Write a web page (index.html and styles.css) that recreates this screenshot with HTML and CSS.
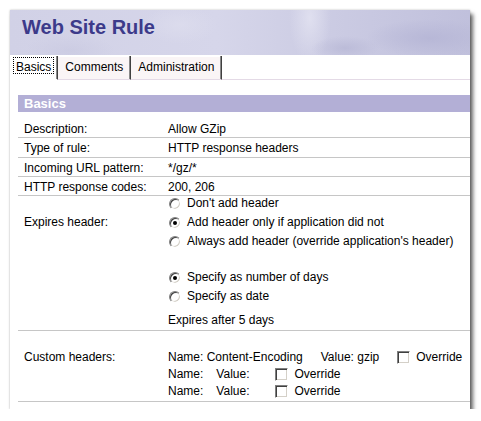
FILE: index.html
```html
<!DOCTYPE html>
<html>
<head>
<meta charset="utf-8">
<title>Web Site Rule</title>
<link rel="stylesheet" href="styles.css">
</head>
<body>
<div class="window">
  <div class="banner"><h1>Web Site Rule</h1></div>
  <div class="tabs">
    <div class="tab active"><span class="focus">Basics</span></div>
    <div class="tab">Comments</div>
    <div class="tab">Administration</div>
    <div class="tab-fill"></div>
  </div>
  <div class="content">
    <div class="section-title">Basics</div>
    <table class="props">
      <tr><td class="label">Description:</td><td class="value">Allow GZip</td></tr>
      <tr><td class="label">Type of rule:</td><td class="value">HTTP response headers</td></tr>
      <tr><td class="label">Incoming URL pattern:</td><td class="value">*/gz/*</td></tr>
      <tr><td class="label">HTTP response codes:</td><td class="value">200, 206</td></tr>
      <tr class="expires">
        <td class="label">Expires header:</td>
        <td class="value">
          <div class="opt-group first">
            <div class="opt"><span class="radio"></span>Don't add header</div>
            <div class="opt"><span class="radio checked"></span>Add header only if application did not</div>
            <div class="opt"><span class="radio"></span>Always add header (override application's header)</div>
          </div>
          <div class="opt-group second">
            <div class="opt"><span class="radio checked"></span>Specify as number of days</div>
            <div class="opt"><span class="radio"></span>Specify as date</div>
          </div>
          <div class="opt note">Expires after 5 days</div>
        </td>
      </tr>
      <tr class="custom">
        <td class="label">Custom headers:</td>
        <td class="value">
          <div class="hdr"><span>Name: Content-Encoding</span><span class="val-wide">Value: gzip</span><span class="check wide"></span>Override</div>
          <div class="hdr"><span>Name:</span><span class="val">Value:</span><span class="check"></span>Override</div>
          <div class="hdr"><span>Name:</span><span class="val">Value:</span><span class="check"></span>Override</div>
        </td>
      </tr>
    </table>
  </div>
</div>
</body>
</html>
```
FILE: styles.css
```css
* { box-sizing: border-box; }

body {
  margin: 0;
  background: #fff;
  font-family: "Liberation Sans", Arial, sans-serif;
  font-size: 12px;
  color: #000;
}

.window {
  margin: 10px 0 0 10px;
  width: 460px;
  height: 399px;
  background: #fff;
  overflow: hidden;
  box-shadow: 0 0 2px rgba(0,0,0,0.25), 3px 4px 4px rgba(0,0,0,0.6);
}

.banner {
  height: 45px;
  padding: 5px 0 0 12px;
  background:
    radial-gradient(ellipse 80px 24px at 420px 28px, rgba(182,182,214,0.9), rgba(182,182,214,0) 80%),
    radial-gradient(ellipse 45px 16px at 335px 38px, rgba(184,184,214,0.8), rgba(184,184,214,0) 75%),
    radial-gradient(ellipse 28px 60px at 300px 8px, rgba(228,228,242,0.8), rgba(228,228,242,0) 75%),
    radial-gradient(ellipse 45px 10px at 385px 52px, rgba(224,224,240,0.9), rgba(224,224,240,0) 75%),
    radial-gradient(ellipse 60px 20px at 60px 40px, rgba(200,200,224,0.6), rgba(200,200,224,0) 75%),
    radial-gradient(ellipse 50px 25px at 170px 15px, rgba(222,222,238,0.7), rgba(222,222,238,0) 75%),
    linear-gradient(90deg, #d1d1e6 0%, #d6d6ea 45%, #cdcde4 65%, #c0c0dc 100%);
}

.banner h1 {
  margin: 0;
  font: bold 20px/24px "Liberation Sans", Arial, sans-serif;
  color: #3c3a8a;
}

.tabs {
  display: flex;
  height: 25px;
  padding: 1px 0 0 2px;
}

.tab {
  height: 24px;
  padding: 4px 7px 0 7px;
  line-height: 14px;
  background: #faf5f6;
  border-right: 1px solid #404040;
  box-shadow: inset -1px 0 0 #8a8a8a, inset 0 1px 0 #fff;
  border-bottom: 1px solid #e4dae6;
}

.tab.active {
  padding: 1px 3px 0 1px;
  background: #fff;
  border-bottom: 1px solid transparent;
}

.focus {
  display: inline-block;
  border: 1px dotted #000;
  padding: 2px 2px 0;
  line-height: 14px;
  height: 17px;
}

.tab-fill {
  flex: 1;
  border-bottom: 1px solid #e4dae6;
}

.content {
  padding: 15px 0 0 8px;
}

.section-title {
  height: 17px;
  padding-left: 6px;
  background: #b3afd6;
  color: #fff;
  font-weight: bold;
  font-size: 13px;
  line-height: 17px;
}

.props {
  margin-top: 7px;
  width: 452px;
  border-collapse: collapse;
}

.props td {
  padding: 3px 0 1px;
  line-height: 14.25px;
  border-bottom: 1px solid #c6c6c6;
  vertical-align: top;
}

.props td.label {
  width: 150px;
  padding-left: 6px;
}

.expires td.value {
  padding: 0;
}

.expires td.label {
  padding-top: 19px;
}

.opt-group.first {
  margin-top: -2px;
}

.opt-group.second {
  margin-top: 17px;
}

.opt {
  display: flex;
  align-items: center;
  height: 19px;
}

.opt.note {
  margin-top: 5px;
}

.radio {
  position: relative;
  width: 12px;
  height: 12px;
  margin: 0 6px 0 1px;
  border-radius: 50%;
  background: #fff;
  border: 1px solid;
  border-color: #808080 #fff #fff #808080;
  box-shadow: inset 1px 1px 0 #404040, inset -1px -1px 0 #d4d0c8;
}

.radio.checked::after {
  content: "";
  position: absolute;
  left: 3px;
  top: 3px;
  width: 4px;
  height: 4px;
  border-radius: 50%;
  background: #000;
}

.custom td {
  padding: 18px 0 1px;
  line-height: 17px;
}

.custom td.label {
  padding-left: 6px;
}

.hdr {
  display: flex;
  align-items: center;
  height: 17px;
}

.val-wide { margin-left: 18px; }
.val { margin-left: 13px; }

.check {
  width: 13px;
  height: 13px;
  margin: 0 6px 0 26px;
  background: #fff;
  border: 1px solid;
  border-color: #808080 #fff #fff #808080;
  box-shadow: inset 1px 1px 0 #404040, inset -1px -1px 0 #d4d0c8;
}

.check.wide { margin-left: 18px; }
```
